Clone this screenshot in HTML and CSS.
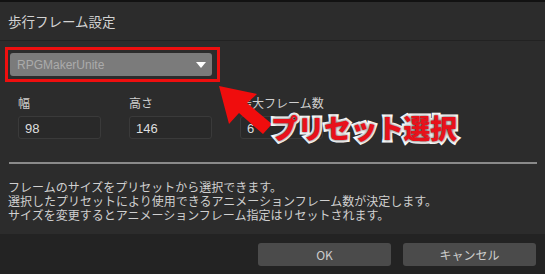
FILE: index.html
```html
<!DOCTYPE html>
<html lang="ja">
<head>
  <meta charset="UTF-8" />
  <meta name="viewport" content="width=device-width, initial-scale=1.0" />
  <title>歩行フレーム設定</title>
  <link rel="stylesheet" href="styles.css">
</head>
<body>

  <div class="dialog">
    <div class="title">歩行フレーム設定</div>

    <div class="content">
      <div class="preset">
        <span>RPGMakerUnite</span>
        <svg class="caret" width="10" height="6" viewBox="0 0 10 6"><path d="M0 0H10L5 6Z" fill="#fff"/></svg>
      </div>

      <div class="fields">
        <div class="field">
          <label>幅</label>
          <div class="input">98</div>
        </div>
        <div class="field">
          <label>高さ</label>
          <div class="input">146</div>
        </div>
        <div class="field">
          <label>最大フレーム数</label>
          <div class="input">6</div>
        </div>
      </div>

      <hr class="rule" />

      <div class="note">
        <div>フレームのサイズをプリセットから選択できます。</div>
        <div>選択したプリセットにより使用できるアニメーションフレーム数が決定します。</div>
        <div>サイズを変更するとアニメーションフレーム指定はリセットされます。</div>
      </div>
    </div>

    <div class="footer">
      <button>OK</button>
      <button>キャンセル</button>
    </div>
  </div>

  <!-- annotation overlay -->
  <div class="mark-box"></div>
  <svg class="mark-arrow" width="545" height="274" viewBox="0 0 545 274">
    <polygon points="219,86 257,94 247,103 272,124 263,134 239,113 229,124" fill="#f00d0d"/>
  </svg>
  <div class="mark-text">プリセット選択</div>

</body>
</html>
```

FILE: styles.css
```css
body {
  margin: 0;
  width: 545px;
  height: 274px;
  overflow: hidden;
  background: #2c2c2c;
  font-family: "Noto Sans CJK JP", "Noto Sans", sans-serif;
  color: #cfcfcf;
  position: relative;
}

.dialog {
  border-top: 2px solid #121212;
  height: 272px;
  display: flex;
  flex-direction: column;
}

.title {
  height: 38px;
  line-height: 38px;
  padding-left: 8px;
  font-size: 13.5px;
  color: #d2d2d2;
  border-bottom: 1px solid #222;
}

.content {
  flex: 1;
  padding: 12px 8px 0 8px;
}

.preset {
  margin-left: 2px;
  width: 202px;
  height: 23px;
  background: #7b7b7b;
  border-radius: 3px;
  display: flex;
  align-items: center;
  justify-content: space-between;
  padding: 0 6px 0 7px;
  box-sizing: border-box;
  font-family: "Liberation Sans", Arial, sans-serif;
  font-size: 12px;
  color: #ababab;
}

.fields {
  display: flex;
  gap: 28px;
  margin: 19px 0 0 10px;
}

.field {
  width: 83px;
  display: flex;
  flex-direction: column;
}

.field label {
  font-size: 12px;
  height: 16px;
  line-height: 16px;
  margin-bottom: 5px;
  white-space: nowrap;
}

.input {
  height: 23px;
  line-height: 23px;
  box-sizing: border-box;
  border: 1px solid #3a3a3a;
  border-radius: 3px;
  background: #292929;
  padding-left: 6px;
  font-family: "Liberation Sans", Arial, sans-serif;
  font-size: 13px;
  color: #dedede;
}

.rule {
  margin: 23px 0 0 1px;
  border: none;
  height: 2px;
  background: #8a8a8a;
}

.note {
  margin-top: 16px;
  font-size: 12px;
  line-height: 14px;
  color: #d0d0d0;
  white-space: nowrap;
}

.footer {
  height: 40px;
  background: #232323;
  display: flex;
  justify-content: flex-end;
  align-items: center;
  gap: 12px;
  padding-right: 9px;
}

.footer button {
  width: 133px;
  height: 23px;
  border: none;
  border-radius: 3px;
  background: #4b4b4b;
  color: #cdcdcd;
  font-family: "Noto Sans CJK JP", "Noto Sans", sans-serif;
  font-size: 12px;
}

/* annotation overlay */
.mark-box {
  position: absolute;
  left: 5px;
  top: 47px;
  width: 209px;
  height: 29px;
  border: 3px solid #ee0f0f;
}

.mark-arrow {
  position: absolute;
  left: 0;
  top: 0;
}

.mark-text {
  position: absolute;
  left: 271px;
  top: 108px;
  font-size: 27px;
  font-weight: 900;
  color: #e8111b;
  -webkit-text-stroke: 5px #fff;
  paint-order: stroke fill;
  letter-spacing: -0.5px;
  text-shadow: 0 0 3px rgba(0, 0, 0, 0.8);
  white-space: nowrap;
}
```
